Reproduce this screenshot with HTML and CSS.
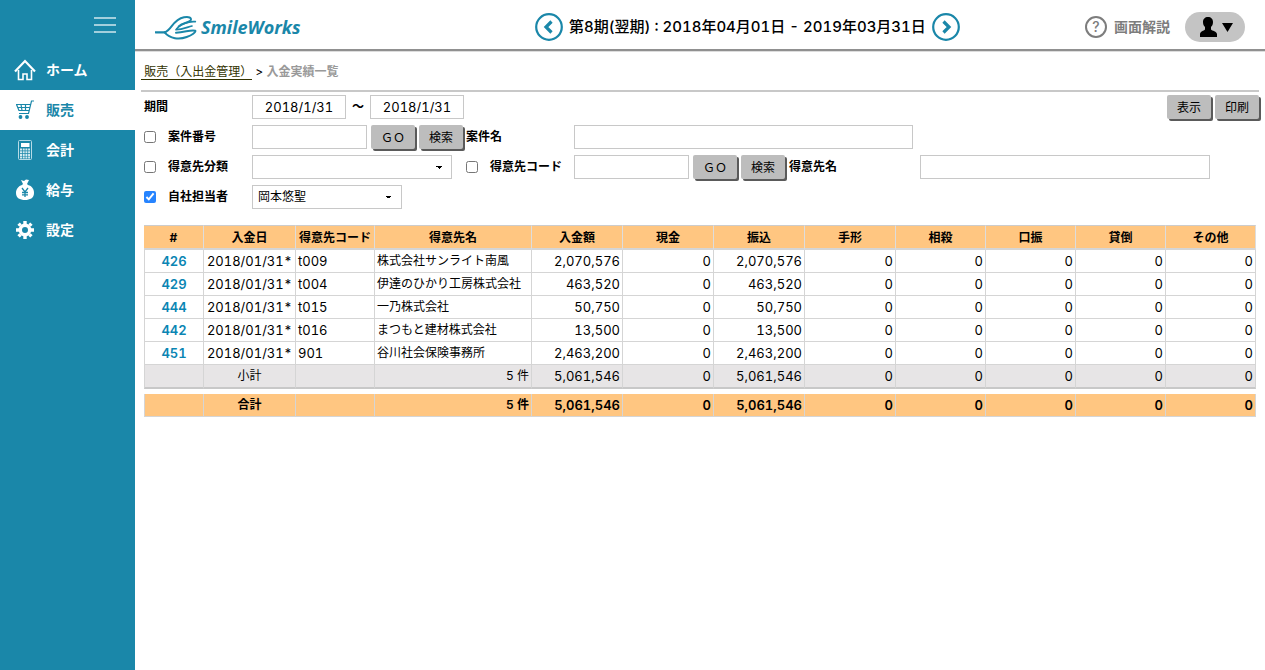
FILE: index.html
```
<!DOCTYPE html>
<html lang="ja">
  <head>
    <meta charset="utf-8">
    <meta name="viewport" content="width=device-width">
    <title>入金実績一覧</title>
    <link rel="stylesheet" href="styles.css">
  </head>
  <body>
    <nav class="side">
      <button class="menu" type="button" aria-label="メニュー"><span></span><span></span><span></span></button>
      <ul>
        <li><a href="#">
          <svg width="22" height="22" viewBox="0 0 22 22" fill="none" stroke="#fff"><path d="M1 12.500 11 2l10 10.500" stroke-width="2.200"/><path d="M4.500 11v9.500h4.500v-5.500h4v5.500h4.500V11" stroke-width="1.600"/></svg>
          ホーム</a></li>
        <li class="on"><a href="#">
          <svg width="22" height="22" viewBox="0 0 22 22" fill="none" stroke="#1a87a9" stroke-width="1.200"><path d="M20 2h-2.500l-3 12.500H5M2 5.500h14.500M3.500 8.500h12M4.500 11.500h11M2.500 5.500l2.500 6M7 5.500l1 6M11.500 5.500v6"/><circle cx="6.500" cy="18" r="1.300" fill="#1a87a9"/><circle cx="13" cy="18" r="1.300" fill="#1a87a9"/></svg>
          販売</a></li>
        <li><a href="#">
          <svg width="22" height="22" viewBox="0 0 22 22"><rect x="4.500" y="1.500" width="13" height="19" rx="1" fill="none" stroke="#b6dbe6"/><path fill="#fff" d="M7 4h8.500v4H7z"/><path stroke="#d5ebf1" stroke-width="2" stroke-dasharray="2 .7" d="M6 10.500h10M6 13.200h10M6 15.900h10M6 18.600h10"/></svg>
          会計</a></li>
        <li><a href="#">
          <svg width="22" height="22" viewBox="0 0 22 22"><path fill="#fff" d="M7 1l3 1 2-1.500L15 1l-2 4 1 1c4 1 6 4 6 8 0 5-4 7-9 7s-9-2-9-7c0-4 2.500-7 6-8l1-1z"/><path d="M8 9l3 4 3-4M11 13v5M8 13.500h6M8 15.800h6" fill="none" stroke="#1a87a9" stroke-width="1.300"/></svg>
          給与</a></li>
        <li><a href="#">
          <svg width="22" height="22" viewBox="0 0 22 22"><g fill="none" stroke="#fff"><circle cx="11" cy="11" r="4.700" stroke-width="3.400"/><path stroke-width="3.400" d="M11 2v3M11 17v3M2 11h3M17 11h3M4.600 4.600l2 2M15.400 15.400l2 2M4.600 17.400l2-2M15.400 6.600l2-2"/></g></svg>
          設定</a></li>
      </ul>
    </nav>
    <div class="main">
      <header class="head">
        <a class="logo" href="#">
          <svg width="45" height="28" viewBox="9 0 135 84" fill="none" stroke="#1a87a9" stroke-linecap="round" stroke-linejoin="round">
            <path d="M11 58h28" stroke-width="7"/>
            <path d="M39 58C60 50 62 20 96 13c14-3 24 1 20 9-6 8-26 8-36 18" stroke-width="6"/>
            <path d="M72 50c12-18 40-26 58-24M72 50c20 0 34-8 48-11" stroke-width="5"/>
            <path d="M38 58c16 20 44 22 66 14 16-6 28-14 26-19-16-4-32 6-58 6" stroke-width="6"/>
          </svg>
          <span>SmileWorks</span>
        </a>
        <div class="term">
          <button type="button" aria-label="前期"><svg width="28" height="28" viewBox="0 0 28 28" fill="none" stroke="#1a87a9"><circle cx="14" cy="14" r="12.800" stroke-width="2.200"/><path d="M16.500 8.500 11 14l5.500 5.500" stroke-width="3.200"/></svg></button>
          <strong>第8期(翌期) : 2018年04月01日 - 2019年03月31日</strong>
          <button type="button" aria-label="翌期"><svg width="28" height="28" viewBox="0 0 28 28" fill="none" stroke="#1a87a9"><circle cx="14" cy="14" r="12.800" stroke-width="2.200"/><path d="M11.500 8.500 17 14l-5.500 5.500" stroke-width="3.200"/></svg></button>
        </div>
        <div class="tools">
          <a class="help" href="#"><i>?</i>画面解説</a>
          <button class="user" type="button" aria-label="ユーザー">
            <svg width="34" height="20" viewBox="0 0 34 20"><path d="M10 0c3 0 5 2 5 5 0 2-.7 4-2 5v2.500c1 1.500 6 1.500 6 5V20H2v-2.500C2 14 6 14 7 12.500V10C5.700 9 5 7 5 5c0-3 2-5 5-5zM24 6h11l-5.500 9z"/></svg>
          </button>
        </div>
      </header>
      <div class="crumb"><a href="#">&nbsp;販売（入出金管理）</a> &gt; <b>入金実績一覧</b></div>

      <form class="filter">
        <div class="row">
          <label for="from">期間</label>
          <div class="cell span">
            <input class="date" id="from" type="text" value="2018/1/31">
            <span class="tilde">～</span>
            <input class="date" type="text" value="2018/1/31" aria-label="期間（終了）">
            <div class="cell right">
              <button class="btn" type="button">表示</button>
              <button class="btn" type="button">印刷</button>
            </div>
          </div>
        </div>
        <div class="row">
          <label><input type="checkbox">案件番号</label>
          <div class="cell">
            <input class="code" type="text" aria-label="案件番号">
            <button class="btn" type="button">ＧＯ</button>
            <button class="btn" type="button">検索</button>
          </div>
          <label for="ankenmei">案件名</label>
          <div class="cell"><input class="title" id="ankenmei" type="text"></div>
        </div>
        <div class="row">
          <label><input type="checkbox">得意先分類</label>
          <div class="cell"><select class="wide" aria-label="得意先分類"><option></option></select></div>
          <label><input type="checkbox">得意先コード</label>
          <div class="cell">
            <input class="code" type="text" aria-label="得意先コード">
            <button class="btn" type="button">ＧＯ</button>
            <button class="btn" type="button">検索</button>
            <label class="namelabel" for="tokuimei">得意先名</label>
            <input class="name" id="tokuimei" type="text">
          </div>
        </div>
        <div class="row">
          <label><input type="checkbox" checked>自社担当者</label>
          <div class="cell"><select aria-label="自社担当者"><option>岡本悠聖</option></select></div>
        </div>
      </form>

      <table class="list">
        <colgroup><col class="c-id"><col class="c-date"><col class="c-code"><col class="c-name"><col span="4" class="c-yen"><col span="4" class="c-etc"></colgroup>
        <thead>
          <tr><th>#</th><th>入金日</th><th>得意先コード</th><th>得意先名</th><th>入金額</th><th>現金</th><th>振込</th><th>手形</th><th>相殺</th><th>口振</th><th>貸倒</th><th>その他</th></tr>
        </thead>
        <tbody>
          <tr><td><a href="#">426</a></td><td>2018/01/31*</td><td>t009</td><td>株式会社サンライト南風</td><td>2,070,576</td><td>0</td><td>2,070,576</td><td>0</td><td>0</td><td>0</td><td>0</td><td>0</td></tr>
          <tr><td><a href="#">429</a></td><td>2018/01/31*</td><td>t004</td><td>伊達のひかり工房株式会社</td><td>463,520</td><td>0</td><td>463,520</td><td>0</td><td>0</td><td>0</td><td>0</td><td>0</td></tr>
          <tr><td><a href="#">444</a></td><td>2018/01/31*</td><td>t015</td><td>一乃株式会社</td><td>50,750</td><td>0</td><td>50,750</td><td>0</td><td>0</td><td>0</td><td>0</td><td>0</td></tr>
          <tr><td><a href="#">442</a></td><td>2018/01/31*</td><td>t016</td><td>まつもと建材株式会社</td><td>13,500</td><td>0</td><td>13,500</td><td>0</td><td>0</td><td>0</td><td>0</td><td>0</td></tr>
          <tr><td><a href="#">451</a></td><td>2018/01/31*</td><td>901</td><td>谷川社会保険事務所</td><td>2,463,200</td><td>0</td><td>2,463,200</td><td>0</td><td>0</td><td>0</td><td>0</td><td>0</td></tr>
          <tr class="sub"><td></td><td>小計</td><td></td><td>5 件</td><td>5,061,546</td><td>0</td><td>5,061,546</td><td>0</td><td>0</td><td>0</td><td>0</td><td>0</td></tr>
        </tbody>
        <tfoot>
          <tr class="space"><td colspan="12"></td></tr>
          <tr class="total"><td></td><td>合計</td><td></td><td>5 件</td><td>5,061,546</td><td>0</td><td>5,061,546</td><td>0</td><td>0</td><td>0</td><td>0</td><td>0</td></tr>
        </tfoot>
      </table>
    </div>
  </body>
</html>
```
FILE: styles.css
```
* {margin: 0; padding: 0; box-sizing: border-box;}
body {
	display: flex;
	min-height: 100vh;
	background: #fff;
	color: #000;
	font: 12px/18px Inter, "Noto Sans CJK JP", sans-serif;
	font-variant-numeric: tabular-nums;
}
button, input, select {font: inherit; font-variant-numeric: inherit; color: inherit;}
button {border: none; background: none; cursor: pointer;}
a {text-decoration: none;}
svg {display: block; flex: none;}

/* サイドメニュー */
.side {width: 135px; flex: none; background: #1a87a9;}
.side ul {list-style: none;}
.menu {
	display: flex;
	flex-direction: column;
	gap: 5px;
	height: 50px;
	margin-left: 94px;
	padding-top: 17px;
}
.menu span {width: 22px; height: 2px; background: #a3cfdd;}
.side a {
	display: flex;
	align-items: center;
	gap: 10px;
	height: 40px;
	padding-left: 14px;
	color: #fff;
	font-size: 14px;
	font-weight: bold;
}
.side .on a {background: #fff; color: #1a87a9;}

/* ヘッダー */
.main {flex: 1; min-width: 0;}
.head {
	display: grid;
	grid-template-columns: minmax(auto, 380px) 1fr auto;
	align-items: center;
	height: 51px;
	padding: 5px 20px 0;
	border-bottom: 2px solid #909090;
	box-shadow: 0 1px 0 #ddd;
}
.logo {
	display: flex;
	align-items: center;
	gap: 1px;
	color: #1a87a9;
	font: italic bold 18px/24px "Open Sans", sans-serif;
}
.term {display: flex; align-items: center; gap: 6px; white-space: nowrap;}
.term strong {font-size: 15px; font-weight: 500;}
.tools {display: flex; justify-content: flex-end; align-items: center; gap: 15px;}
.help {
	display: flex;
	align-items: center;
	gap: 7px;
	color: #7d7d7d;
	font-size: 14px;
	font-weight: bold;
}
.help i {
	width: 22px;
	height: 22px;
	border: 2px solid #7d7d7d;
	border-radius: 50%;
	font-style: normal;
	font-weight: 500;
	text-align: center;
}
.user {
	display: flex;
	align-items: center;
	justify-content: center;
	width: 60px;
	height: 30px;
	border-radius: 15px;
	background: #c4c4c4;
}
.user svg {overflow: visible;}
.crumb {
	margin: 0 6px;
	padding: 12px 0 9px;
	border-bottom: 2px solid #c8c8c8;
}
.crumb a {color: #330; border-bottom: 1px solid #330;}
.crumb b {color: #999;}

/* 検索条件 */
.filter {display: grid; gap: 6px; padding: 3px 6px 0 9px;}
.row {
	display: grid;
	grid-template-columns: 108px 214px 108px 1fr;
	align-items: center;
	height: 24px;
}
.row label {display: flex; align-items: center; font-weight: bold;}
.cell {display: flex; align-items: center; gap: 4px;}
.span {grid-column: 2 / -1;}
.right {margin-left: auto;}
.filter input[type=text], .filter select {
	height: 24px;
	border: 1px solid #c8c8c8;
	border-radius: 0;
	background: #fff;
}
.filter input[type=checkbox] {width: 12px; height: 12px; margin-right: 12px; accent-color: #2684ff;}
.filter .date {width: 94px; font-size: 13px; text-align: center;}
.tilde {width: 16px; text-align: center; font-weight: bold;}
.filter .code {width: 115px;}
.filter .title {width: 339px;}
.filter .name {width: 290px;}
.namelabel {width: 127px;}
.filter select {
	width: 150px;
	padding: 0 5px;
	appearance: none;
	background: linear-gradient(to bottom right, #000 50%, transparent 50%) right 9px center / 3px 3px no-repeat, linear-gradient(to bottom left, #000 50%, transparent 50%) right 12px center / 3px 3px no-repeat;
}
.filter .wide {width: 200px;}
.btn {
	width: 44px;
	height: 24px;
	padding-top: 1px;
	border-radius: 2px;
	background: #bdbdbd;
	box-shadow: 2px 2px 0 #5a5a5a;
}

/* 一覧 */
.list {
	width: calc(100% - 18px);
	margin: 16px 9px 0;
	table-layout: fixed;
	border-spacing: 0;
}
.c-id {width: 60px;}
.c-date {width: 92px;}
.c-code {width: 79px;}
.c-name {width: 157px;}
.c-yen {width: 91px;}
.c-etc {width: 90px;}
.list th {
	height: 25px;
	padding-top: 1px;
	border-top: 1px solid #ccc;
	border-right: 1px solid #ddd;
	border-bottom: 2px solid #d5d5d5;
	background: #ffc681;
	white-space: nowrap;
}
.list td {
	height: 23px;
	padding: 0 2px;
	border-right: 1px solid #d5d5d5;
	border-bottom: 1px solid #d5d5d5;
	font-size: 13px;
	text-align: right;
	white-space: nowrap;
}
.list td:first-child {border-left: 1px solid #d5d5d5; text-align: center;}
.list td:nth-child(2) {text-align: center;}
.list td:nth-child(3) {text-align: left;}
.list td:nth-child(4) {font-size: 12px; text-align: left;}
.list a {color: #0a85b3; font-weight: 600;}
.list .sub td {height: 24px; border-bottom: 2px solid #c8c8c8; background: #e7e5e6;}
.list .total td {background: #ffc681; font-weight: 600;}
.list .sub td:nth-child(2), .list .total td:nth-child(2) {font-size: 12px;}
.list .sub td:nth-child(4), .list .total td:nth-child(4) {text-align: right;}
.list .space td {height: 5px; border: none;}
```
